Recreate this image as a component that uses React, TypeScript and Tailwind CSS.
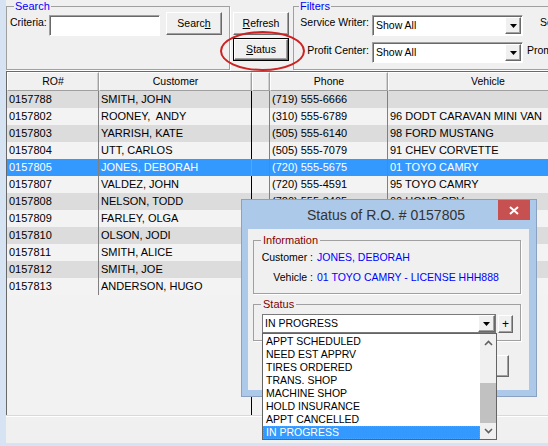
import React from "react";

type Row = [string, string, string, string];

const rows: Row[] = [
  ["0157788", "SMITH, JOHN", "(719) 555-6666", ""],
  ["0157802", "ROONEY,  ANDY", "(310) 555-6789", "96 DODT CARAVAN MINI VAN"],
  ["0157803", "YARRISH, KATE", "(505) 555-6140", "98 FORD MUSTANG"],
  ["0157804", "UTT, CARLOS", "(505) 555-7079", "91 CHEV CORVETTE"],
  ["0157805", "JONES, DEBORAH", "(720) 555-5675", "01 TOYO CAMRY"],
  ["0157807", "VALDEZ, JOHN", "(720) 555-4591", "95 TOYO CAMRY"],
  ["0157808", "NELSON, TODD", "(720) 555-3405", "00 HOND CRV"],
  ["0157809", "FARLEY, OLGA", "(303) 555-1212", "97 JEEP CHEROKEE"],
  ["0157810", "OLSON, JODI", "(303) 555-8870", "02 FORD TAURUS"],
  ["0157811", "SMITH, ALICE", "(719) 555-2231", "99 HOND ACCORD"],
  ["0157812", "SMITH, JOE", "(719) 555-4410", "94 CHEV S10"],
  ["0157813", "ANDERSON, HUGO", "(720) 555-9902", "00 DODG RAM"],
];

const statuses = [
  "APPT SCHEDULED",
  "NEED EST APPRV",
  "TIRES ORDERED",
  "TRANS. SHOP",
  "MACHINE SHOP",
  "HOLD INSURANCE",
  "APPT CANCELLED",
  "IN PROGRESS",
];

const raised =
  "bg-[#f0f0f0] border border-t-white border-l-white border-r-[#696969] border-b-[#696969] shadow-[inset_-1px_-1px_0_#a0a0a0]";
const sunken =
  "bg-white border border-t-[#a0a0a0] border-l-[#a0a0a0] border-r-white border-b-white shadow-[inset_1px_1px_0_#696969]";

function DownTri() {
  return (
    <svg width="7" height="4" viewBox="0 0 7 4">
      <path d="M0 0h7L3.5 4z" fill="#000" />
    </svg>
  );
}

function Combo({ text, className = "" }: { text: string; className?: string }) {
  return (
    <div className={`flex items-stretch ${sunken} ${className}`}>
      <span className="flex-1 pl-[3px] pt-[1px] leading-[17px] text-[10.5px] whitespace-nowrap overflow-hidden">
        {text}
      </span>
      <div className={`w-[16px] mt-[1px] mb-[1px] mr-[1px] flex items-center justify-center ${raised}`}>
        <DownTri />
      </div>
    </div>
  );
}

function Toolbar() {
  return (
    <div className="flex h-[71px] shrink-0">
      <fieldset className="w-[224px] h-[70px] shrink-0 border border-[#a0a0a0] shadow-[1px_1px_0_#fff]">
        <legend className="ml-[7px] px-[1px] text-[11px] leading-[12px] text-[#0000ff]">Search</legend>
        <div className="flex items-start pl-[3px]">
          <span className="w-[39px] mt-[4px] text-[10.5px] leading-[13px]">Criteria:</span>
          <div className={`w-[111px] h-[21px] mt-[3px] ${sunken}`} />
          <div className={`ml-[6px] w-[56px] h-[23px] flex items-center justify-center text-[10.5px] ${raised}`}>
            Searc<span className="underline">h</span>
          </div>
        </div>
      </fieldset>

      <div className="ml-[3px] w-[56px] shrink-0 flex flex-col">
        <div className={`mt-[12px] h-[23px] flex items-center justify-center text-[10.5px] ${raised}`}>
          <span className="underline">R</span>efresh
        </div>
        <div className="mt-[3px] h-[23px] border border-black">
          <div className={`h-full flex items-center justify-center text-[10.5px] ${raised}`}>
            <span className="underline">S</span>tatus
          </div>
        </div>
      </div>

      <fieldset className="ml-[4px] w-[340px] h-[70px] shrink-0 border border-[#a0a0a0] shadow-[1px_1px_0_#fff]">
        <legend className="ml-[5px] px-[1px] text-[11px] leading-[12px] text-[#0000ff]">Filters</legend>
        <div className="flex items-start mt-[3px]">
          <span className="w-[75px] mt-[1px] text-right text-[10.5px] leading-[13px] whitespace-nowrap">
            Service Writer:
          </span>
          <Combo text="Show All" className="ml-[3px] w-[151px] h-[21px]" />
          <span className="ml-[17px] mt-[1px] text-[10.5px] leading-[13px] whitespace-nowrap">Sort Order:</span>
        </div>
        <div className="flex items-start mt-[6px]">
          <span className="w-[75px] mt-[2px] text-right text-[10.5px] leading-[13px] whitespace-nowrap">
            Profit Center:
          </span>
          <Combo text="Show All" className="ml-[3px] w-[151px] h-[21px]" />
          <span className="ml-[4px] mt-[2px] text-[10.5px] leading-[13px] whitespace-nowrap">Promised:</span>
        </div>
      </fieldset>
    </div>
  );
}

const colW = ["w-[92px]", "w-[153px]", "w-[18px]", "w-[118px]", "w-[200px]"];

function Grid() {
  const heads = ["RO#", "Customer", "", "Phone", "Vehicle"];
  return (
    <div className="flex-1 min-h-0 flex flex-col border-t border-l border-[#696969] overflow-hidden">
      <div className="flex h-[19px] shrink-0 bg-[#f0f0f0]">
        {heads.map((h, i) => (
          <div
            key={i}
            className={`${colW[i]} shrink-0 flex items-center justify-center text-[10.5px] border border-t-white border-l-white border-r-[#a0a0a0] border-b-[#a0a0a0] shadow-[inset_-1px_0_0_#d0d0d0]`}
          >
            {h}
          </div>
        ))}
      </div>
      {rows.map((r, i) => {
        const sel = i === 4;
        const bg = sel ? "bg-[#3399ff] text-white" : i % 2 === 0 ? "bg-[#dcdcdc]" : "bg-[#f3f3f3]";
        return (
          <div key={r[0]} className={`flex h-[17px] shrink-0 text-[11px] leading-[17px] ${bg}`}>
            <div className={`${colW[0]} shrink-0 pl-[2px] border-r border-[#808080]`}>{r[0]}</div>
            <div
              className={`${colW[1]} shrink-0 pl-[2px] whitespace-pre border-r ${sel ? "border-[#d08a3a]" : "border-black"}`}
            >
              {r[1]}
            </div>
            <div className={`${colW[2]} shrink-0 border-r border-[#808080]`} />
            <div className={`${colW[3]} shrink-0 pl-[2px] border-r border-[#808080]`}>{r[2]}</div>
            <div className={`${colW[4]} shrink-0 pl-[2px] whitespace-nowrap`}>{r[3]}</div>
          </div>
        );
      })}
      <div className="flex-1 flex bg-[#f2f2f2]">
        <div className="w-[244px] shrink-0" />
        <div className="flex-1 border-l border-black" />
      </div>
    </div>
  );
}

function StatusDialog() {
  return (
    <div className="absolute left-[241px] top-[199px] w-[296px] h-[198px] border border-[#8aa2bf] bg-[#adc9e9] flex flex-col">
      <div className="h-[29px] shrink-0 grid grid-cols-[1fr_auto_1fr] pr-[6px]">
        <div />
        <span className="self-center text-[14px] leading-[18px] text-[#333333] whitespace-nowrap">
          Status of R.O. # 0157805
        </span>
        <div className="justify-self-end w-[32px] h-[20px] bg-[#c75050] flex items-center justify-center">
          <svg width="10" height="9" viewBox="0 0 10 9">
            <path d="M1 1l8 7M9 1L1 8" stroke="#fff" strokeWidth="2" />
          </svg>
        </div>
      </div>

      <div className="ml-[6px] mr-[7px] mb-[6px] flex-1 bg-[#f0f0f0] flex flex-col">
        <fieldset className="ml-[5px] mt-[5px] w-[268px] h-[60px] border border-[#a0a0a0] shadow-[1px_1px_0_#fff]">
          <legend className="ml-[7px] px-[2px] text-[11px] leading-[13px] text-[#800000]">Information</legend>
          <div className="pt-[4px] text-[10.5px] leading-[13px]">
            <div className="flex">
              <span className="w-[59px] text-right whitespace-nowrap">Customer :</span>
              <span className="ml-[4px] text-[#0000ff] whitespace-nowrap">JONES, DEBORAH</span>
            </div>
            <div className="flex mt-[7px]">
              <span className="w-[59px] text-right whitespace-nowrap">Vehicle :</span>
              <span className="ml-[4px] text-[#0000ff] whitespace-nowrap">01 TOYO CAMRY - LICENSE HHH888</span>
            </div>
          </div>
        </fieldset>

        <fieldset className="ml-[5px] mt-[4px] w-[268px] h-[43px] border border-[#a0a0a0] shadow-[1px_1px_0_#fff]">
          <legend className="ml-[7px] px-[2px] text-[11px] leading-[13px] text-[#800000]">Status</legend>
          <div className="flex items-start mt-[3px] ml-[8px]">
            <div className="w-[234px] h-[19px] flex bg-white border border-[#7a7a7a]">
              <span className="flex-1 pl-[2px] text-[10.5px] leading-[17px]">IN PROGRESS</span>
              <div className={`w-[17px] flex items-center justify-center ${raised}`}>
                <DownTri />
              </div>
            </div>
            <div className={`ml-[2px] mt-[1px] w-[15px] h-[18px] flex items-center justify-center text-[12px] leading-none ${raised}`}>
              +
            </div>
          </div>
        </fieldset>

        <div className="mt-[14px] flex justify-end pr-[20px]">
          <div className={`w-[75px] h-[22px] flex items-center justify-center text-[10.5px] ${raised}`}>OK</div>
        </div>
      </div>
    </div>
  );
}

function DropList() {
  return (
    <div className="absolute left-[262px] top-[333px] w-[235px] h-[107px] border border-[#646464] bg-white flex">
      <div className="flex-1 pt-[1px] text-[10.5px] leading-[13px]">
        {statuses.map((s, i) =>
          i === statuses.length - 1 ? (
            <div
              key={s}
              className="h-[13px] bg-[#3399ff] text-white pl-[2px] border border-dotted border-[#c98a3e] leading-[11px]"
            >
              {s}
            </div>
          ) : (
            <div key={s} className="h-[13px] pl-[3px] whitespace-nowrap">
              {s}
            </div>
          )
        )}
      </div>
      <div className="w-[16px] flex flex-col bg-[#f0f0f0]">
        <div className="h-[17px] flex items-center justify-center">
          <svg width="9" height="6" viewBox="0 0 9 6">
            <path d="M1 5l3.5-3.5L8 5" stroke="#606060" strokeWidth="1.6" fill="none" />
          </svg>
        </div>
        <div className="h-[32px]" />
        <div className="h-[40px] bg-[#c1c1c1]" />
        <div className="flex-1 flex items-center justify-center">
          <svg width="9" height="6" viewBox="0 0 9 6">
            <path d="M1 1l3.5 3.5L8 1" stroke="#606060" strokeWidth="1.6" fill="none" />
          </svg>
        </div>
      </div>
    </div>
  );
}

export default function App() {
  return (
    <div className="relative w-[548px] h-[446px] overflow-hidden bg-[#f0f0f0] font-['Liberation_Sans',Arial,sans-serif] text-black flex flex-col select-none">
      <div className="flex flex-1 min-h-0">
        <div className="w-[6px] shrink-0 bg-[#d5e3f2]" />
        <div className="flex-1 min-w-0 flex flex-col overflow-hidden">
          <Toolbar />
          <Grid />
          <div className="h-[28px] shrink-0 border-t border-[#d9d9d9] shadow-[inset_0_1px_0_#fff]" />
        </div>
      </div>
      <div className="h-[3px] shrink-0 bg-[#d5e3f2]" />

      <div className="absolute left-[220px] top-[31px] w-[85px] h-[40px] rounded-[50%] border-2 border-[#cc2222]" />
      <StatusDialog />
      <DropList />
    </div>
  );
}
